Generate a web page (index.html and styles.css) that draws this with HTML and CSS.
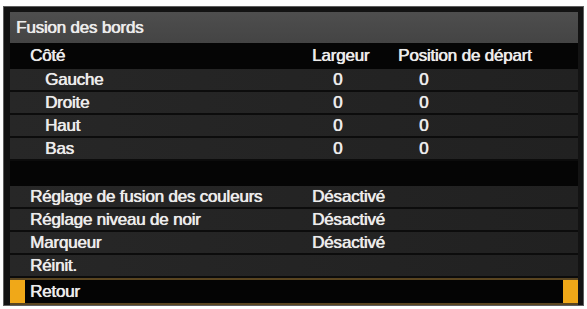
FILE: index.html
```html
<!DOCTYPE html>
<html lang="fr">
<head>
    <meta charset="UTF-8">
    <meta name="viewport" content="width=device-width, initial-scale=1.0">
    <title>Fusion des bords</title>
    <link rel="stylesheet" href="styles.css">
</head>
<body>
    <div class="osd">
        <div class="osd-title">Fusion des bords</div>

        <div class="osd-head">
            <span class="lbl">Côté</span>
            <span>Largeur</span>
            <span>Position de départ</span>
        </div>

        <div class="osd-row">
            <span class="lbl sub">Gauche</span>
            <span class="num">0</span>
            <span class="num">0</span>
        </div>
        <div class="osd-row">
            <span class="lbl sub">Droite</span>
            <span class="num">0</span>
            <span class="num">0</span>
        </div>
        <div class="osd-row">
            <span class="lbl sub">Haut</span>
            <span class="num">0</span>
            <span class="num">0</span>
        </div>
        <div class="osd-row">
            <span class="lbl sub">Bas</span>
            <span class="num">0</span>
            <span class="num">0</span>
        </div>

        <div class="osd-gap"></div>

        <div class="osd-row">
            <span class="lbl">Réglage de fusion des couleurs</span>
            <span class="val">Désactivé</span>
        </div>
        <div class="osd-row">
            <span class="lbl">Réglage niveau de noir</span>
            <span class="val">Désactivé</span>
        </div>
        <div class="osd-row">
            <span class="lbl">Marqueur</span>
            <span class="val">Désactivé</span>
        </div>
        <div class="osd-row">
            <span class="lbl">Réinit.</span>
        </div>

        <!-- ligne sélectionnée -->
        <div class="osd-sel">
            <span class="mark"></span>
            <span class="sel-lbl">Retour</span>
            <span class="mark end"></span>
        </div>
    </div>
</body>
</html>
```

FILE: styles.css
```css
body {
    margin: 0;
    background: #fff;
    font-family: "Liberation Sans", Arial, sans-serif;
}
.osd {
    margin: 6px 0 0 3px;
    width: 581px;
    height: 300px;
    box-sizing: border-box;
    border: 1px solid #5e5e5e;
    background: #131313;
    padding: 5px 5px 2px 6px;
    color: #ececec;
    font-size: 17px;
    letter-spacing: -0.2px;
    text-shadow: 0.5px 0 0 #ececec, 0 0 1px rgba(255, 255, 255, 0.4);
}
.osd-title {
    height: 31px;
    line-height: 31px;
    padding-left: 6px;
    background: linear-gradient(#4e4e4e, #444);
}
.osd-head,
.osd-row {
    display: grid;
    grid-template-columns: 302px 86px 1fr;
    align-items: center;
    box-sizing: border-box;
}
.osd-head {
    height: 26px;
    background: #050505;
}
.osd-row {
    height: 23px;
    background: linear-gradient(90deg, #272727, #212121);
    border-bottom: 2px solid #0c0c0c;
}
.lbl {
    padding-left: 20px;
}
.lbl.sub {
    padding-left: 35px;
}
.osd-row .num:nth-child(2) {
    padding-left: 21px;
}
.osd-row .num:nth-child(3) {
    padding-left: 21px;
}
.osd-gap {
    height: 25px;
    background: #050505;
}
.osd-sel {
    display: flex;
    align-items: stretch;
    height: 27px;
    box-sizing: border-box;
    background: #040404;
    border-top: 2px solid #5a4520;
    border-bottom: 2px solid #5a4520;
}
.mark {
    width: 15px;
    background: #f0a818;
}
.mark.end {
    margin-left: auto;
}
.sel-lbl {
    padding-left: 5px;
    line-height: 23px;
}
```
